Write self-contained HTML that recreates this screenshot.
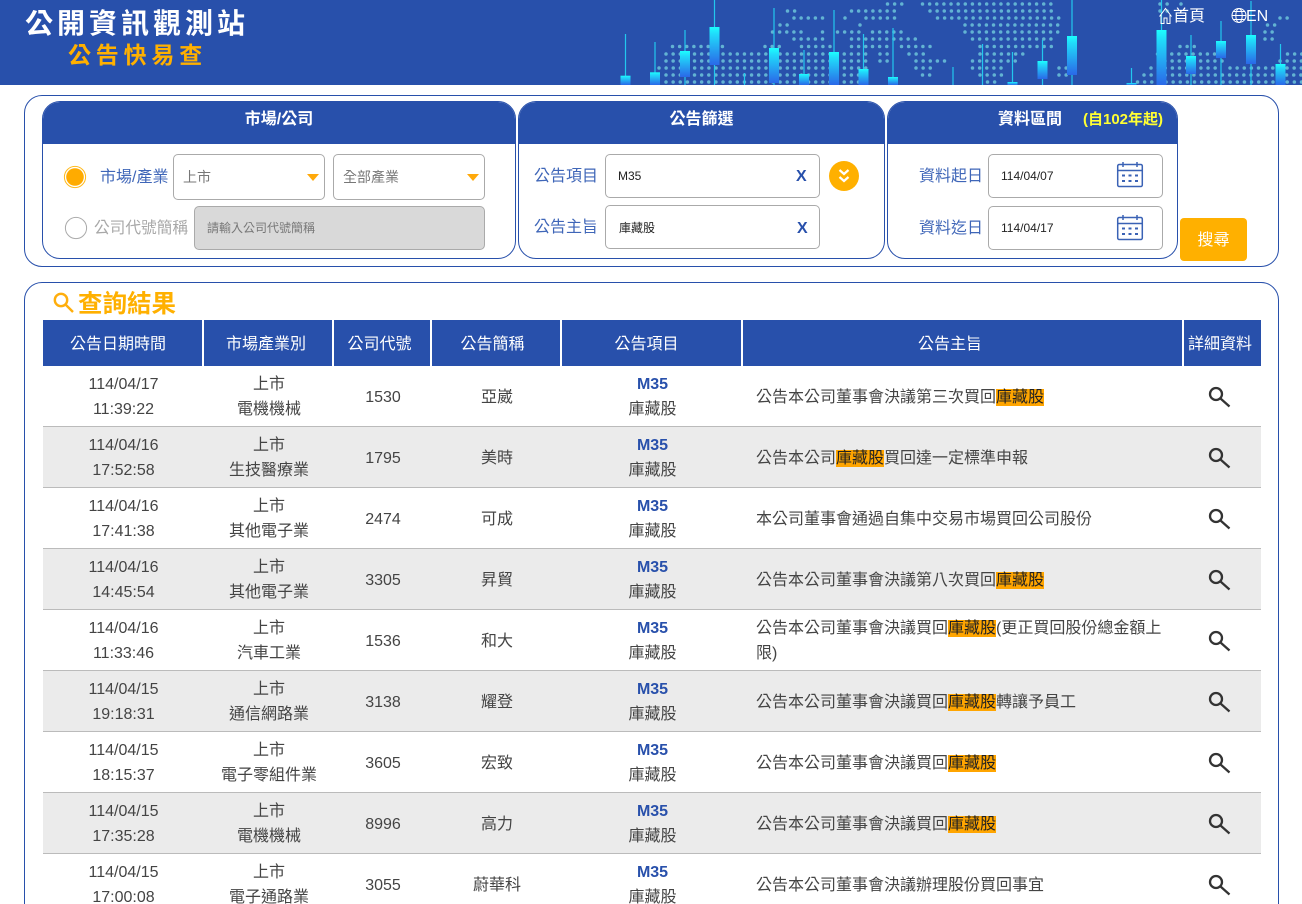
<!DOCTYPE html>
<html lang="zh-Hant"><head><meta charset="utf-8"><title>公開資訊觀測站</title>
<style>
*{box-sizing:border-box}
html,body{margin:0;padding:0;width:1302px;height:904px;overflow:hidden;background:#fff}
body{position:relative;font-family:"Liberation Sans","Noto Sans CJK TC",sans-serif;color:#444;font-size:16px}
.a{position:absolute;white-space:nowrap}
#hd{position:absolute;left:0;top:0;width:1302px;height:85px;background:#2850ab;overflow:hidden}
.panel{position:absolute;border:1px solid #2850ab;border-radius:18px;background:#fff}
.sec{position:absolute;top:101px;height:158px;border:1px solid #2850ab;border-radius:18px;overflow:hidden;background:#fff}
.sec .h{position:absolute;left:-1px;right:-1px;top:-1px;height:43px;background:#2850ab;color:#fff;font-weight:bold;font-size:16px;line-height:38px;text-align:center}
.lbl{position:absolute;white-space:nowrap;color:#3f66b8;font-size:16px;line-height:20px}
.box{position:absolute;border:1px solid #aaa;border-radius:5px;background:#fff;color:#222;font-size:12px}
.tri{position:absolute;width:0;height:0;border-left:6.5px solid transparent;border-right:6.5px solid transparent;border-top:7px solid #ffa90a}
.x{position:absolute;color:#2850ab;font-weight:bold;font-size:16px;line-height:20px}
table{position:absolute;left:43px;top:320px;width:1218px;border-collapse:separate;border-spacing:0;table-layout:fixed}
th{height:46px;background:#2850ab;color:#fff;font-weight:normal;font-size:16px;padding:0 0 3px;border-right:2px solid #fff;text-align:center}
th:last-child{border-right:0;white-space:nowrap}
td{height:61px;padding:2px 0 0;text-align:center;line-height:25px;border-bottom:1px solid #bbb;color:#444;font-size:16px}
td:last-child{padding:0}
tr.e td{background:#ebebeb}
td.s{text-align:left;padding:2px 10px 0 13px;line-height:25px}
td b{color:#2850ab;font-size:16px}
mark{background:#ffa500;color:#222;padding:0}
td svg{display:block;margin:0 0 0 22px}
</style></head><body>
<div id="hd">
<svg width="1302" height="85" style="position:absolute;left:0;top:0">
<defs><linearGradient id="g" x1="0" y1="0" x2="0" y2="1"><stop offset="0" stop-color="#1cffff"/><stop offset=".18" stop-color="#20dcfb"/><stop offset="1" stop-color="#2a68e8"/></linearGradient></defs>
<g fill="none" stroke="#62b3d3" stroke-width="3.5" stroke-linecap="round" stroke-dasharray="0 7.13">
<path d="M887.5 4H906M922.5 4H1056M1160 4H1168M1181 4H1182"/>
<path d="M787.5 11H798M851.5 11H898M930 11H1056M1160 11H1168"/>
<path d="M794 18H827M845 18H846M866 18H898M937.5 18H1063M1280 18H1291"/>
<path d="M780 25H791M860 25H861M965 25H1063M1267.5 25H1276"/>
<path d="M772.5 32H806M822.5 32H823M837.5 32H866M872.5 32H906M965 32H1063M1265 32H1276"/>
<path d="M794 39H827M851.5 39H866M872.5 39H921M972.5 39H1056M1265 39H1276"/>
<path d="M672.5 46.5H726M765 46.5H783M801.5 46.5H833M851.5 46.5H866M872.5 46.5H888M901.5 46.5H934M980 46.5H1056M1180 46.5H1198"/>
<path d="M666 54H871M880 54H891M909 54H928M980 54H1026M1157.5 54H1228M1287.5 54H1302"/>
<path d="M666 61H871M880 61H891M916 61H948M972.5 61H1021M1165 61H1228M1280 61H1302"/>
<path d="M659 68H871M916 68H934M972.5 68H1006M1059 68H1076M1151 68H1221M1230 68H1302"/>
<path d="M666 75H863M922.5 75H934M980 75H1006M1059 75H1071M1144 75H1302"/>
<path d="M666 82H863M987.5 82H998M1137.5 82H1302"/>
</g>
<g stroke="#22c8ee" stroke-width="1.2">
<path d="M625.5 34V85M655 42V85M685 30V85M714.5 0V85M744.5 73V85M774 8V85M804 50V85M834 10V85M863.5 34V85M893 28V85M953 67V85M982.5 44V85M1012.5 52V85M1042.5 40V85M1072 0V85M1131.5 68V85M1161.5 0V85M1191 35V85M1221 21V85M1251 1V85M1280.5 44V85"/>
</g>
<g fill="url(#g)">
<rect x="620.5" y="75.7" width="10" height="9.3"/><rect x="650" y="72.3" width="10" height="12.7"/><rect x="680" y="51" width="10" height="26"/><rect x="709.5" y="27" width="10" height="38"/><rect x="769" y="48" width="10" height="35"/><rect x="799" y="74" width="10" height="11"/><rect x="829" y="52" width="10" height="33"/><rect x="858.5" y="69" width="10" height="16"/><rect x="888" y="77" width="10" height="8"/><rect x="1007.5" y="82" width="10" height="3"/><rect x="1037.5" y="61" width="10" height="18"/><rect x="1067" y="36" width="10" height="39"/><rect x="1126.5" y="83" width="10" height="2"/><rect x="1156.5" y="30" width="10" height="55"/><rect x="1186" y="56" width="10" height="18"/><rect x="1216" y="41" width="10" height="17"/><rect x="1246" y="35" width="10" height="29"/><rect x="1275.5" y="64" width="10" height="21"/>
</g>
<g fill="none" stroke="#fff" stroke-width="1">
<path d="M1159.5 16.5L1165.5 8.5L1171.5 16.5M1161 15V23.5H1164V18H1167V23.5H1170V15"/>
<circle cx="1239" cy="15.5" r="7"/><ellipse cx="1239" cy="15.5" rx="3.2" ry="7"/><path d="M1232 15.5H1246M1233 11.5H1245M1233 19.5H1245"/>
</g>
</svg>
<div class="a" style="left:25px;top:6px;font-weight:bold;font-size:28px;line-height:36px;letter-spacing:4px;color:#fff">公開資訊觀測站</div>
<div class="a" style="left:68px;top:40px;font-weight:bold;font-size:23px;line-height:30px;letter-spacing:4.8px;color:#ffb000">公告快易查</div>
<div class="a" style="left:1173px;top:7px;color:#fff;font-size:16px;line-height:20px">首頁</div>
<div class="a" style="left:1246px;top:7px;color:#fff;font-size:16px;line-height:20px">EN</div>
</div>

<div class="panel" style="left:24px;top:95px;width:1255px;height:172px"></div>

<div class="sec" style="left:42px;width:474px"><div class="h">市場/公司</div></div>
<div class="sec" style="left:518px;width:367px"><div class="h">公告篩選</div></div>
<div class="sec" style="left:887px;width:291px"><div class="h" style="text-align:left"><span class="a" style="left:111px">資料區間</span><span class="a" style="left:196px;color:#ffff33;font-size:15px">(自102年起)</span></div></div>

<svg class="a" style="left:60px;top:160px" width="34" height="84"><circle cx="15" cy="17" r="8.8" fill="#ffab00"/><circle cx="15" cy="17" r="10.6" fill="none" stroke="#ffb91a" stroke-width="1"/><circle cx="16" cy="68" r="10.6" fill="#fff" stroke="#aaa" stroke-width="1"/></svg>
<div class="lbl" style="left:100px;top:168px">市場/產業</div>
<div class="box" style="left:173px;top:154px;width:152px;height:46px;color:#777;font-size:14px;line-height:45px;padding-left:9px">上市<span class="tri" style="right:5px;top:19px"></span></div>
<div class="box" style="left:333px;top:154px;width:152px;height:46px;color:#777;font-size:14px;line-height:45px;padding-left:9px">全部產業<span class="tri" style="right:5px;top:19px"></span></div>
<div class="lbl" style="left:94px;top:219px;color:#a8a8a8;font-size:15.7px">公司代號簡稱</div>
<div class="box" style="left:194px;top:206px;width:291px;height:44px;background:#d9d9d9;color:#777;line-height:43px;padding-left:12px">請輸入公司代號簡稱</div>

<div class="lbl" style="left:534px;top:167px">公告項目</div>
<div class="box" style="left:605px;top:154px;width:215px;height:44px;line-height:42px;padding-left:12px">M35<span class="x" style="left:190px;top:12px">X</span></div>
<div class="lbl" style="left:534px;top:218px">公告主旨</div>
<div class="box" style="left:605px;top:205px;width:215px;height:44px;line-height:45px;padding-left:13px">庫藏股<span class="x" style="left:191px;top:13px">X</span></div>
<svg class="a" style="left:829px;top:161px" width="30" height="30"><circle cx="15" cy="15" r="15" fill="#ffb000"/><path d="M10.5 9L15 13L19.5 9M10.5 16L15 20L19.5 16" fill="none" stroke="#fff" stroke-width="2.2"/></svg>

<div class="lbl" style="left:919px;top:167px">資料起日</div>
<div class="box" style="left:988px;top:154px;width:175px;height:44px;line-height:42px;padding-left:12px">114/04/07</div>
<div class="lbl" style="left:919px;top:219px">資料迄日</div>
<div class="box" style="left:988px;top:206px;width:175px;height:44px;line-height:42px;padding-left:12px">114/04/17</div>
<svg class="a" style="left:1116px;top:161px" width="28" height="80" fill="none" stroke="#3a62b5" stroke-width="1.5">
<g><rect x="1.7" y="3.5" width="24.6" height="22" rx="1.5"/><path d="M1.7 9.5H26.3M7 1V6M21 1V6"/><path d="M6 14.5H22M6 20H22" stroke-width="2" stroke-dasharray="3 3.5"/></g>
<g transform="translate(0,53)"><rect x="1.7" y="3.5" width="24.6" height="22" rx="1.5"/><path d="M1.7 9.5H26.3M7 1V6M21 1V6"/><path d="M6 14.5H22M6 20H22" stroke-width="2" stroke-dasharray="3 3.5"/></g>
</svg>
<div class="a" style="left:1180px;top:218px;width:67px;height:43px;background:#ffb000;border-radius:4px;color:#fff;text-align:center;line-height:46px;font-size:16px">搜尋</div>

<div class="panel" style="left:24px;top:282px;width:1255px;height:660px"></div>
<svg class="a" style="left:53px;top:292px" width="24" height="24" fill="none" stroke="#ffae0c" stroke-width="2.4"><circle cx="8" cy="8" r="6.2"/><path d="M12.5 12.5L20 20"/></svg>
<div class="a" style="left:78px;top:290px;color:#ffb000;font-size:24.5px;line-height:30px;font-weight:bold">查詢結果</div>

<table>
<colgroup><col style="width:161px"><col style="width:130px"><col style="width:98px"><col style="width:130px"><col style="width:181px"><col style="width:441px"><col style="width:77px"></colgroup>
<tr><th style="padding-right:9px">公告日期時間</th><th style="padding-right:4px">市場產業別</th><th style="padding-right:5px">公司代號</th><th style="padding-right:7px">公告簡稱</th><th style="padding-right:10px">公告項目</th><th style="padding-right:25px">公告主旨</th><th style="padding-right:5px">詳細資料</th></tr>
<tr><td>114/04/17<br>11:39:22</td><td>上市<br>電機機械</td><td>1530</td><td>亞崴</td><td><b>M35</b><br>庫藏股</td><td class="s">公告本公司董事會決議第三次買回<mark>庫藏股</mark></td><td><svg width="26" height="24" fill="none" stroke="#333" stroke-width="2.3"><circle cx="10" cy="10" r="6"/><path d="M14.5 14.5L23.5 22.5"/></svg></td></tr>
<tr class="e"><td>114/04/16<br>17:52:58</td><td>上市<br>生技醫療業</td><td>1795</td><td>美時</td><td><b>M35</b><br>庫藏股</td><td class="s">公告本公司<mark>庫藏股</mark>買回達一定標準申報</td><td><svg width="26" height="24" fill="none" stroke="#333" stroke-width="2.3"><circle cx="10" cy="10" r="6"/><path d="M14.5 14.5L23.5 22.5"/></svg></td></tr>
<tr><td>114/04/16<br>17:41:38</td><td>上市<br>其他電子業</td><td>2474</td><td>可成</td><td><b>M35</b><br>庫藏股</td><td class="s">本公司董事會通過自集中交易市場買回公司股份</td><td><svg width="26" height="24" fill="none" stroke="#333" stroke-width="2.3"><circle cx="10" cy="10" r="6"/><path d="M14.5 14.5L23.5 22.5"/></svg></td></tr>
<tr class="e"><td>114/04/16<br>14:45:54</td><td>上市<br>其他電子業</td><td>3305</td><td>昇貿</td><td><b>M35</b><br>庫藏股</td><td class="s">公告本公司董事會決議第八次買回<mark>庫藏股</mark></td><td><svg width="26" height="24" fill="none" stroke="#333" stroke-width="2.3"><circle cx="10" cy="10" r="6"/><path d="M14.5 14.5L23.5 22.5"/></svg></td></tr>
<tr><td>114/04/16<br>11:33:46</td><td>上市<br>汽車工業</td><td>1536</td><td>和大</td><td><b>M35</b><br>庫藏股</td><td class="s">公告本公司董事會決議買回<mark>庫藏股</mark>(更正買回股份總金額上<br>限)</td><td><svg width="26" height="24" fill="none" stroke="#333" stroke-width="2.3"><circle cx="10" cy="10" r="6"/><path d="M14.5 14.5L23.5 22.5"/></svg></td></tr>
<tr class="e"><td>114/04/15<br>19:18:31</td><td>上市<br>通信網路業</td><td>3138</td><td>耀登</td><td><b>M35</b><br>庫藏股</td><td class="s">公告本公司董事會決議買回<mark>庫藏股</mark>轉讓予員工</td><td><svg width="26" height="24" fill="none" stroke="#333" stroke-width="2.3"><circle cx="10" cy="10" r="6"/><path d="M14.5 14.5L23.5 22.5"/></svg></td></tr>
<tr><td>114/04/15<br>18:15:37</td><td>上市<br>電子零組件業</td><td>3605</td><td>宏致</td><td><b>M35</b><br>庫藏股</td><td class="s">公告本公司董事會決議買回<mark>庫藏股</mark></td><td><svg width="26" height="24" fill="none" stroke="#333" stroke-width="2.3"><circle cx="10" cy="10" r="6"/><path d="M14.5 14.5L23.5 22.5"/></svg></td></tr>
<tr class="e"><td>114/04/15<br>17:35:28</td><td>上市<br>電機機械</td><td>8996</td><td>高力</td><td><b>M35</b><br>庫藏股</td><td class="s">公告本公司董事會決議買回<mark>庫藏股</mark></td><td><svg width="26" height="24" fill="none" stroke="#333" stroke-width="2.3"><circle cx="10" cy="10" r="6"/><path d="M14.5 14.5L23.5 22.5"/></svg></td></tr>
<tr><td>114/04/15<br>17:00:08</td><td>上市<br>電子通路業</td><td>3055</td><td>蔚華科</td><td><b>M35</b><br>庫藏股</td><td class="s">公告本公司董事會決議辦理股份買回事宜</td><td><svg width="26" height="24" fill="none" stroke="#333" stroke-width="2.3"><circle cx="10" cy="10" r="6"/><path d="M14.5 14.5L23.5 22.5"/></svg></td></tr>
</table>
</body></html>
